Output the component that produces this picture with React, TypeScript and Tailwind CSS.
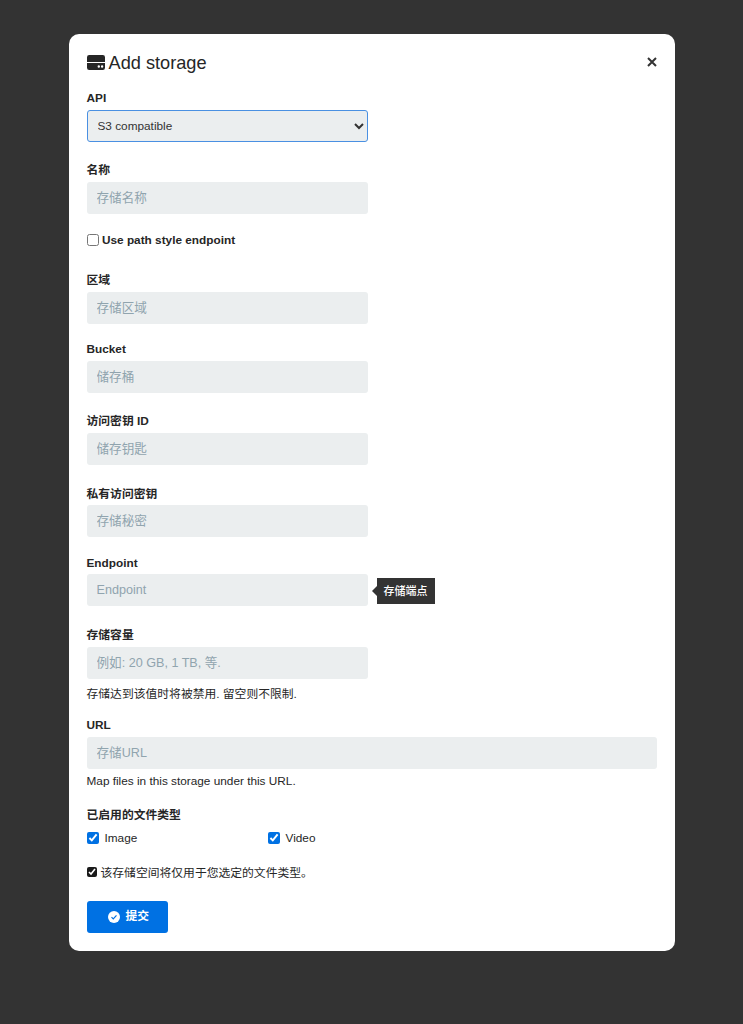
const LABEL = 'block text-[11.8px] font-bold leading-[normal] text-[#262626]'
const FIELD_INPUT =
  'block w-[281px] h-[32px] rounded-[3px] bg-[#ebeeef] px-2.5 text-[12.6px] text-[#333] outline-none placeholder:text-[#90a4ae]'
const HELP = 'mt-[5px] text-[11.8px] leading-[normal] text-[#262626]'

function Field({ label, placeholder, wide, help, className = 'mb-[18px]', labelGap = 'mb-[5px]' }: {
  label: string
  placeholder: string
  wide?: boolean
  help?: string
  className?: string
  labelGap?: string
}) {
  return (
    <div className={className}>
      <label className={LABEL + ' ' + labelGap}>{label}</label>
      <input className={wide ? FIELD_INPUT + ' !w-[570px]' : FIELD_INPUT} placeholder={placeholder} />
      {help && <p className={HELP}>{help}</p>}
    </div>
  )
}

function StorageIcon() {
  return (
    <svg width="18" height="15" viewBox="0 0 18 15" className="mr-[4px]">
      <path fill="#262626" d="M2.2 0h13.6A2.2 2.2 0 0 1 18 2.2V7H0V2.2A2.2 2.2 0 0 1 2.2 0z" />
      <path fill="#262626" fillRule="evenodd" d="M0 8h18v4.8a2.2 2.2 0 0 1-2.2 2.2H2.2A2.2 2.2 0 0 1 0 12.8V8zm11.8 2.3a1.2 1.2 0 1 0 0 2.4 1.2 1.2 0 0 0 0-2.4zm3.3 0a1.2 1.2 0 1 0 0 2.4 1.2 1.2 0 0 0 0-2.4z" />
    </svg>
  )
}

export default function App() {
  return (
    <div className="min-h-[1024px] bg-[#333333] pt-[34px] font-['Liberation_Sans','Noto_Sans_CJK_SC',sans-serif]">
      <div className="mx-auto h-[917px] w-[606px] rounded-[10px] bg-white px-[18px] pt-[16px]">
        <div className="mb-[17px] flex h-[24px] items-center justify-between">
          <h2 className="flex items-center text-[18.2px] leading-[24px] text-[#262626]">
            <StorageIcon />
            <span className="pt-[1px]">Add storage</span>
          </h2>
          <svg width="10" height="10" viewBox="0 0 10 10">
            <path d="M1 1l8 8M9 1l-8 8" stroke="#333" strokeWidth="2" fill="none" />
          </svg>
        </div>

        <div className="mb-[18px]">
          <label className={LABEL + ' mb-[5px]'}>API</label>
          <select className="block h-[32px] w-[281px] rounded-[3px] border border-[#4a90e2] bg-[#ebeeef] px-[6px] text-[11.8px] text-[#333]">
            <option>S3 compatible</option>
          </select>
        </div>

        <Field label="名称" placeholder="存储名称" className="mb-[19px]" />

        <label className="mb-[23px] flex h-[14px] items-center text-[11.8px] font-bold leading-[normal] text-[#262626]">
          <input type="checkbox" className="mr-[3.5px] h-[12px] w-[12px]" />
          Use path style endpoint
        </label>

        <Field label="区域" placeholder="存储区域" />
        <Field label="Bucket" placeholder="储存桶" />
        <Field label="访问密钥 ID" placeholder="储存钥匙" className="mb-[19px]" />
        <Field label="私有访问密钥" placeholder="存储秘密" className="mb-[19px]" labelGap="mb-[4px]" />

        <div className="mb-[19px]">
          <label className={LABEL + ' mb-[4px]'}>Endpoint</label>
          <div className="flex items-center">
            <input className={FIELD_INPUT} placeholder="Endpoint" />
            <div className="relative ml-[9px] mt-[2px] flex h-[26px] w-[58px] items-center justify-center bg-[#333333] text-[11px] font-medium text-white">
              <span className="absolute left-[-5px] top-[8px] h-0 w-0 border-y-[5px] border-r-[5px] border-y-transparent border-r-[#333333]" />
              存储端点
            </div>
          </div>
        </div>

        <Field label="存储容量" placeholder="例如: 20 GB, 1 TB, 等." help="存储达到该值时将被禁用. 留空则不限制." className="mb-[17px]" />
        <Field label="URL" placeholder="存储URL" wide help="Map files in this storage under this URL." className="mb-[17px]" />

        <label className={LABEL + ' mb-[9px]'}>已启用的文件类型</label>
        <div className="mb-[18px] flex h-[14px] text-[11.8px] leading-[normal] text-[#262626]">
          <label className="flex w-[181px] items-center">
            <input type="checkbox" defaultChecked className="mr-[6px] h-[12px] w-[12px] accent-[#0071e3]" />
            Image
          </label>
          <label className="flex items-center">
            <input type="checkbox" defaultChecked className="mr-[6px] h-[12px] w-[12px] accent-[#0071e3]" />
            Video
          </label>
        </div>

        <label className="mb-[21px] flex items-center text-[11.8px] leading-[normal] text-[#262626]">
          <input type="checkbox" defaultChecked className="mr-[4px] h-[10px] w-[10px] accent-[#1a1a1a]" />
          该存储空间将仅用于您选定的文件类型。
        </label>

        <button className="flex h-[32px] w-[81px] items-center rounded-[3px] bg-[#0071e3] pl-[21px] text-[11.8px] font-bold text-white">
          <svg width="12" height="12" viewBox="0 0 13 13" className="mr-[6px]">
            <circle cx="6.5" cy="6.5" r="6.5" fill="#fff" />
            <path d="M3.8 6.6l1.9 1.9 3.5-3.7" fill="none" stroke="#0071e3" strokeWidth="1.3" />
          </svg>
          提交
        </button>
      </div>
    </div>
  )
}
